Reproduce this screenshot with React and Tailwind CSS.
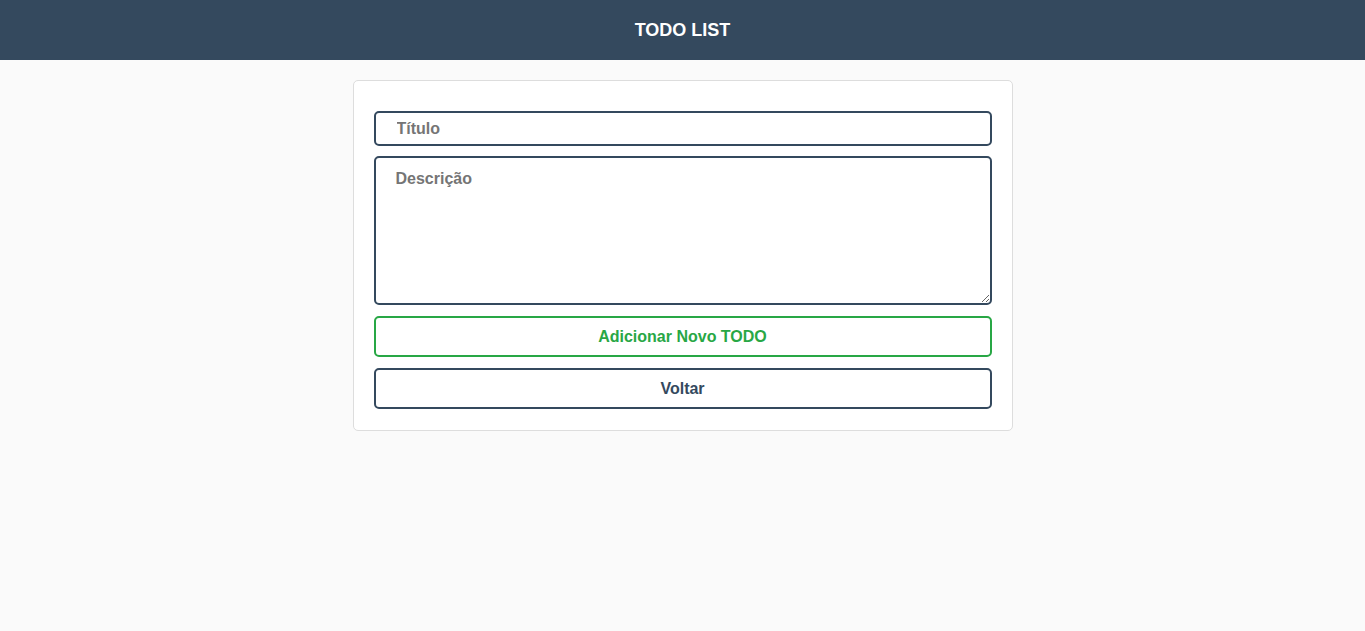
export default function App() {
  return (
    <div className="min-h-screen bg-[#fafafa] font-['Liberation_Sans',Arial,sans-serif]">
      <header className="flex h-[60px] items-center justify-center bg-[#34495e]">
        <h1 className="text-[18px] font-bold text-white">TODO LIST</h1>
      </header>

      <main className="flex justify-center pt-5">
        <div className="w-[660px] rounded-[5px] border border-[#dddddd] bg-white px-5 pt-[30px] pb-[21px]">
          <form className="flex flex-col" onSubmit={(e) => e.preventDefault()}>
            <input
              type="text"
              placeholder="Título"
              className="h-[35px] rounded-[5px] border-2 border-[#34495e] px-[21px] text-[16px] font-bold text-[#333] outline-none placeholder:text-[#757575]"
            />
            <textarea
              placeholder="Descrição"
              className="mt-[10px] h-[149px] rounded-[5px] border-2 border-[#34495e] px-5 pt-[9px] pb-[11px] text-[16px] font-bold text-[#333] outline-none placeholder:text-[#757575]"
            />
            <button
              type="submit"
              className="mt-[11px] h-[41px] rounded-[5px] border-2 border-[#28a745] bg-white text-[16px] font-bold text-[#28a745]"
            >
              Adicionar Novo TODO
            </button>
            <button
              type="button"
              className="mt-[11px] h-[41px] rounded-[5px] border-2 border-[#34495e] bg-white text-[16px] font-bold text-[#34495e]"
            >
              Voltar
            </button>
          </form>
        </div>
      </main>
    </div>
  );
}
